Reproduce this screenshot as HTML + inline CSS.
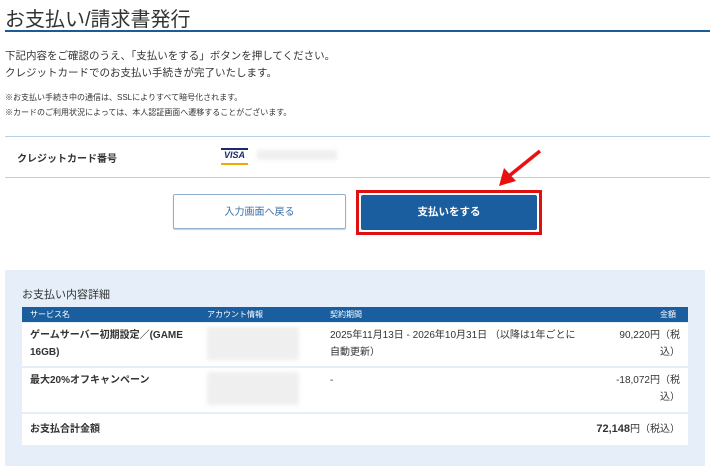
<!DOCTYPE html>
<html><head><meta charset="utf-8"><style>
*{margin:0;padding:0;box-sizing:border-box}
body{width:710px;height:475px;background:#fff;font-family:"Liberation Sans","Noto Sans CJK JP",sans-serif;color:#333;position:relative;overflow:hidden}
.a{position:absolute;white-space:nowrap}
.blur{position:absolute;background:#efefef;filter:blur(2px)}
</style></head><body>
<div class="a" style="left:5px;top:3px;font-size:20px;color:#333">お支払い/請求書発行</div>
<div class="a" style="left:5px;top:30px;width:705px;height:2px;background:#1d5a9a"></div>
<div class="a" style="left:5px;top:48px;font-size:10.5px;line-height:17px">下記内容をご確認のうえ、「支払いをする」ボタンを押してください。<br>クレジットカードでのお支払い手続きが完了いたします。</div>
<div class="a" style="left:5px;top:90px;font-size:8px;line-height:15px">※お支払い手続き中の通信は、SSLによりすべて暗号化されます。<br>※カードのご利用状況によっては、本人認証画面へ遷移することがございます。</div>
<div class="a" style="left:5px;top:136px;width:705px;height:1px;background:#b9cfe2"></div>
<div class="a" style="left:17px;top:150px;font-size:10px;font-weight:bold">クレジットカード番号</div>
<div class="a" style="left:221px;top:148px;width:27px;height:2px;background:#1a2a6c"></div>
<div class="a" style="left:221px;top:150px;width:27px;font-size:9px;font-weight:bold;font-style:italic;color:#1a2a6c;text-align:center">VISA</div>
<div class="a" style="left:221px;top:163px;width:27px;height:2px;background:#f2a900"></div>
<div class="blur" style="left:257px;top:150px;width:80px;height:10px"></div>
<div class="a" style="left:5px;top:177px;width:705px;height:1px;background:#b9cfe2"></div>
<div class="a" style="left:173px;top:194px;width:173px;height:35px;border:1px solid #8fb0d0;border-radius:2px;font-size:10px;color:#3a6ea5;text-align:center;line-height:35px;box-shadow:0 1px 1px #ccc">入力画面へ戻る</div>
<div class="a" style="left:356px;top:190px;width:186px;height:45px;border:3px solid #e01010"></div>
<div class="a" style="left:361px;top:195px;width:176px;height:35px;background:#1a5ea0;border-radius:2px;font-size:10.5px;font-weight:bold;color:#fff;text-align:center;line-height:35px">支払いをする</div>
<svg class="a" style="left:495px;top:148px" width="50" height="42"><line x1="45" y1="3" x2="14" y2="28" stroke="#e81010" stroke-width="3.5"/><polygon points="4,38 9,20 21,33" fill="#e81010"/></svg>
<div class="a" style="left:5px;top:270px;width:700px;height:196px;background:#e6eff9"></div>
<div class="a" style="left:22px;top:286px;font-size:11px">お支払い内容詳細</div>
<div class="a" style="left:22px;top:307px;width:666px;height:15px;background:#1a5ea0;color:#fff;font-size:8px;line-height:15px">
<span class="a" style="left:8px">サービス名</span><span class="a" style="left:185px">アカウント情報</span><span class="a" style="left:308px">契約期間</span><span class="a" style="left:638px">金額</span></div>
<div class="a" style="left:22px;top:323px;width:666px;height:43px;background:#fff;font-size:10px;line-height:17px">
<span class="a" style="left:8px;top:4px;font-weight:bold">ゲームサーバー初期設定／(GAME<br>16GB)</span>
<div class="blur" style="left:185px;top:4px;width:92px;height:33px"></div>
<span class="a" style="left:308px;top:4px">2025年11月13日 - 2026年10月31日 （以降は1年ごとに<br>自動更新）</span>
<span class="a" style="right:8px;top:4px;text-align:right">90,220円（税<br>込）</span></div>
<div class="a" style="left:22px;top:368px;width:666px;height:44px;background:#fff;font-size:10px;line-height:17px">
<span class="a" style="left:8px;top:4px;font-weight:bold">最大20%オフキャンペーン</span>
<div class="blur" style="left:185px;top:4px;width:92px;height:33px"></div>
<span class="a" style="left:308px;top:4px">-</span>
<span class="a" style="right:8px;top:4px;text-align:right">-18,072円（税<br>込）</span></div>
<div class="a" style="left:22px;top:414px;width:666px;height:31px;background:#fff;font-size:10px;line-height:31px">
<span class="a" style="left:8px;font-weight:bold">お支払合計金額</span>
<span class="a" style="right:8px"><b style="font-size:11px">72,148</b>円（税込）</span></div>
</body></html>
